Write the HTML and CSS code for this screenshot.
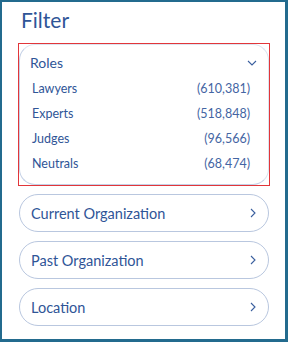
FILE: index.html
```html
<!DOCTYPE html>
<html lang="en">
<head>
    <meta charset="UTF-8">
    <title>Filter</title>
    <link rel="stylesheet" href="styles.css">
</head>
<body>
    <div class="panel">
        <h1 class="title">Filter</h1>

        <div class="highlight">
            <div class="group open">
                <div class="group-head">
                    <span>Roles</span>
                    <svg class="chev" width="10" height="6" viewBox="0 0 10 6"><path d="M1 1 L5 5 L9 1" fill="none" stroke="#3a5f9e" stroke-width="1.1"/></svg>
                </div>
                <ul class="roles">
                    <li><span>Lawyers</span><span class="count">(610,381)</span></li>
                    <li><span>Experts</span><span class="count">(518,848)</span></li>
                    <li><span>Judges</span><span class="count">(96,566)</span></li>
                    <li><span>Neutrals</span><span class="count">(68,474)</span></li>
                </ul>
            </div>
        </div>

        <div class="group pill">
            <span>Current Organization</span>
            <svg class="chev" width="6" height="10" viewBox="0 0 6 10"><path d="M1 1 L5 5 L1 9" fill="none" stroke="#3a5f9e" stroke-width="1.1"/></svg>
        </div>
        <div class="group pill">
            <span>Past Organization</span>
            <svg class="chev" width="6" height="10" viewBox="0 0 6 10"><path d="M1 1 L5 5 L1 9" fill="none" stroke="#3a5f9e" stroke-width="1.1"/></svg>
        </div>
        <div class="group pill">
            <span>Location</span>
            <svg class="chev" width="6" height="10" viewBox="0 0 6 10"><path d="M1 1 L5 5 L1 9" fill="none" stroke="#3a5f9e" stroke-width="1.1"/></svg>
        </div>
    </div>
</body>
</html>
```

FILE: styles.css
```css
body {
    margin: 0;
    font-family: Lato, "Open Sans", sans-serif;
    color: #2f5597;
    background: #fff;
}
.panel {
    box-sizing: border-box;
    width: 288px;
    height: 342px;
    border-style: solid;
    border-color: #236b8e;
    border-width: 2px 3px 3px 2px;
    padding: 6px 16px 0 17px;
}
.title {
    margin: 0 0 11px 2px;
    font-size: 21px;
    font-weight: normal;
    line-height: 24px;
    color: #2f5597;
}
.highlight {
    border: 1px solid #e2363a;
    margin: 0 -1px 8px -1px;
}
.group {
    border: 1px solid #c5d1e6;
    background: #fff;
}
.open {
    border-color: #dde4f0 #dde4f0 #c5d1e6 #c5d1e6;
    border-radius: 16px;
    padding: 0 0 8px 0;
}
.group-head {
    display: flex;
    justify-content: space-between;
    align-items: center;
    padding: 8px 11px 3px 10px;
    font-size: 14px;
    line-height: 20px;
}
.roles {
    list-style: none;
    margin: 0;
    padding: 0 18px 0 12px;
}
.roles li {
    display: flex;
    justify-content: space-between;
    align-items: center;
    height: 25px;
    font-size: 12.5px;
}
.count {
    color: #4465a3;
}
.pill {
    box-sizing: border-box;
    height: 38px;
    border-radius: 19px;
    display: flex;
    justify-content: space-between;
    align-items: center;
    padding: 0 12px 0 11px;
    margin-bottom: 9px;
    font-size: 14.5px;
    border-color: #b9c7df;
}
.chev {
    display: block;
}
```
